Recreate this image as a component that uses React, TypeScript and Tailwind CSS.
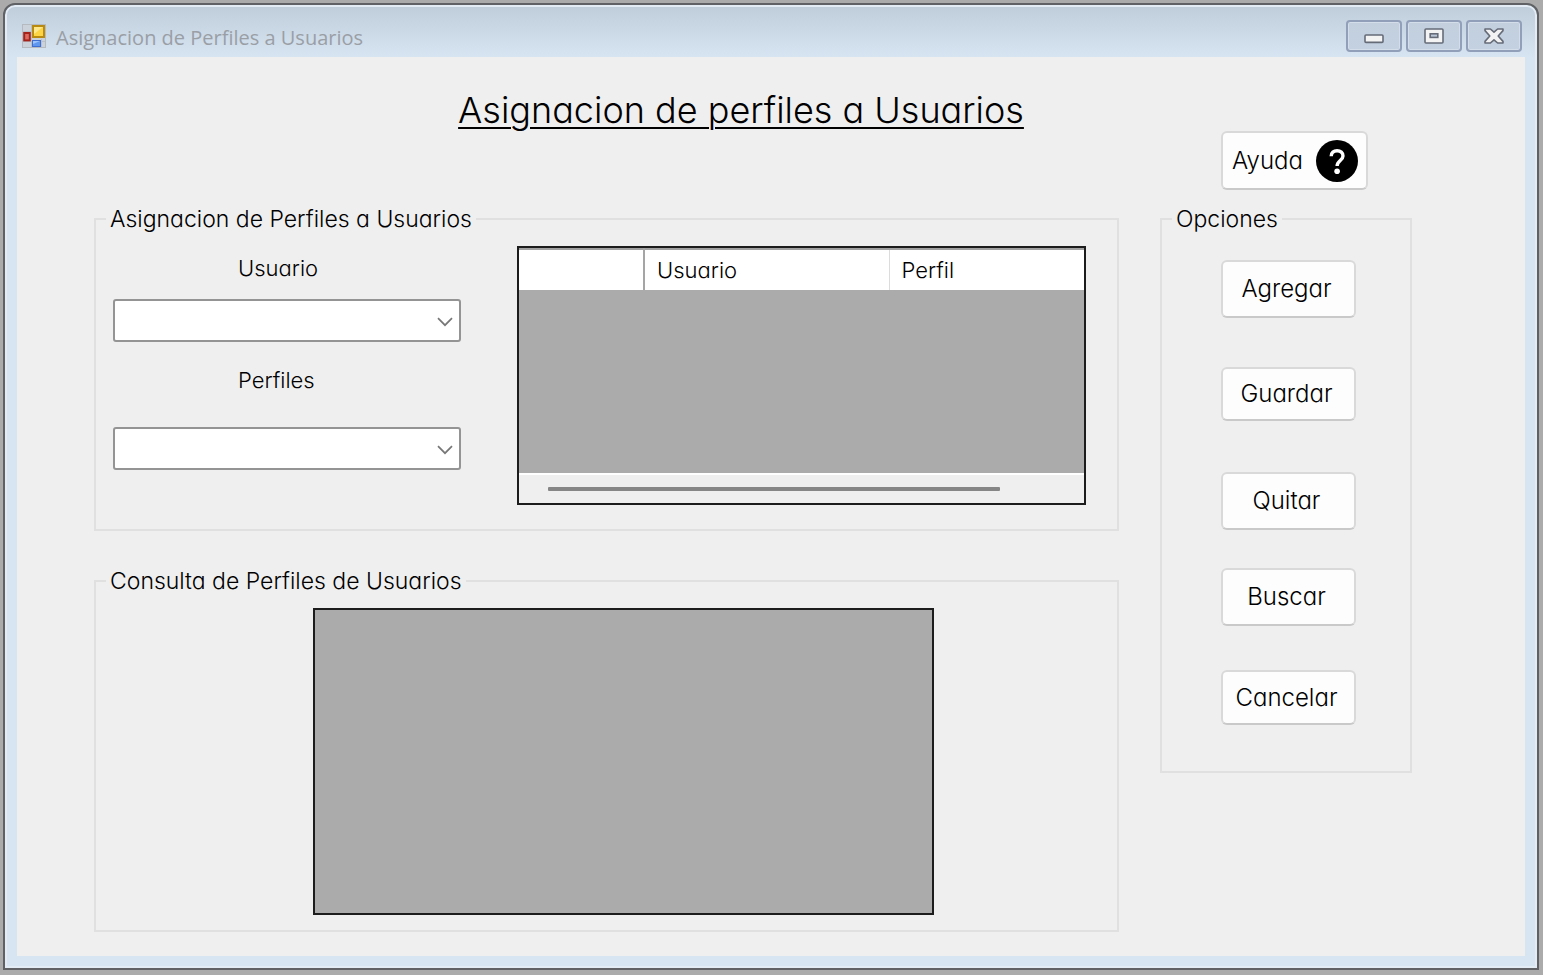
import type { ReactNode } from "react";

const caption =
  "flex h-8 w-14 items-center justify-center rounded-[4px] border-2 border-[#919fb8] bg-linear-to-b from-[#c3cfdd] to-[#c3d1e1] shadow-[inset_0_0_0_1px_#d3deea]";

function FormIcon() {
  return (
    <svg width="24" height="24" viewBox="0 0 24 24" aria-hidden="true">
      <rect x="0.5" y="0.5" width="23" height="23" fill="#cbd2da" stroke="#b5bac1" />
      <path d="M9.5 1v22M1 17.5h22M19.5 15v8M1 7.5h9" stroke="#b9c0c9" fill="none" />
      <rect x="2.2" y="9" width="5.6" height="7.4" fill="#dc6a60" stroke="#a5221b" strokeWidth="2" />
      <rect x="11" y="2" width="11" height="11" fill="#fdd444" stroke="#b98a10" strokeWidth="2" />
      <path d="M12 3h9l-9 7z" fill="#ffe88c" />
      <rect x="10.5" y="16.5" width="8" height="6" fill="#5e97ee" stroke="#3e6fd0" />
      <path d="M11 17h7l-7 3z" fill="#9cc4fa" />
    </svg>
  );
}

function MinimizeIcon() {
  return (
    <svg width="20" height="16" viewBox="0 0 20 16" aria-hidden="true">
      <rect x="1" y="7" width="18" height="7.4" rx="1" fill="#f3f3f3" stroke="#666b78" strokeWidth="1.6" />
    </svg>
  );
}

function MaximizeIcon() {
  return (
    <svg width="20" height="16" viewBox="0 0 20 16" aria-hidden="true">
      <rect x="1" y="1" width="18" height="14" rx="1" fill="#f3f3f3" stroke="#666b78" strokeWidth="1.6" />
      <rect x="6.2" y="5.8" width="7.6" height="3.6" fill="#b9c6d6" stroke="#666b78" strokeWidth="1.6" />
    </svg>
  );
}

function CloseIcon() {
  return (
    <svg width="20" height="16" viewBox="0 0 20 16" aria-hidden="true">
      <path
        d="M1 1h5.4L10 4.2 13.6 1H19v1.6L14.2 8l4.8 5.4V15h-5.4L10 11.8 6.4 15H1v-1.6L5.8 8 1 2.6z"
        fill="#f3f3f3"
        stroke="#666b78"
        strokeWidth="1.6"
        strokeLinejoin="round"
      />
    </svg>
  );
}

function HelpIcon() {
  return (
    <svg width="42" height="42" viewBox="0 0 42 42" aria-hidden="true">
      <circle cx="21" cy="21" r="21" fill="#000" />
      <path
        d="M15.2 16.2c0-3.6 2.5-5.5 5.9-5.5s5.9 2.1 5.9 5.3c0 4.4-5.9 4.8-5.9 10"
        fill="none"
        stroke="#fff"
        strokeWidth="3.4"
      />
      <circle cx="21.1" cy="31.2" r="2.8" fill="#fff" />
    </svg>
  );
}

function GroupBox({ title, className, children }: { title: string; className: string; children: ReactNode }) {
  return (
    <fieldset className="min-w-0 border-2 border-[#e0e0e0]">
      <legend className="ml-[10px] px-1 text-[23px] leading-7">{title}</legend>
      <div className={className}>{children}</div>
    </fieldset>
  );
}

function Combo({ id }: { id: string }) {
  return (
    <div className="relative">
      <select
        id={id}
        className="block h-[43px] w-full appearance-none rounded-[3px] border-2 border-[#949494] bg-white px-2"
      >
        <option value=""></option>
      </select>
      <svg
        className="pointer-events-none absolute top-[18px] right-2"
        width="16"
        height="10"
        viewBox="0 0 16 10"
        fill="none"
        stroke="#777"
        strokeWidth="1.7"
        aria-hidden="true"
      >
        <path d="M1 1.2l7 7 7-7" />
      </svg>
    </div>
  );
}

const actions = [
  { label: "Agregar", size: "h-[58px]" },
  { label: "Guardar", size: "mt-[49px] h-[54px]" },
  { label: "Quitar", size: "mt-[51px] h-[58px]" },
  { label: "Buscar", size: "mt-[38px] h-[58px]" },
  { label: "Cancelar", size: "mt-[44px] h-[55px]" },
];

const button = "rounded-[6px] border-2 border-[#d9d9d9] border-b-[#c9c9c9] bg-[#fdfdfd] text-[24px]";

export default function App() {
  return (
    <div className="flex min-h-screen flex-col bg-[#ababab] pt-[3px] pr-1 pb-[5px] pl-[3px] text-black">
      <div className="flex grow flex-col rounded-t-[12px] border-2 border-[#5f6164] bg-[#d7e4f2] bg-linear-to-b from-[#bfcddb] to-[#d7e4f2] to-[52px] px-3 pb-3 shadow-[inset_0_0_0_2px_#e3ecf5]">
        <header className="flex h-[52px] items-center pt-[10px] pr-[3px] pl-[5px]">
          <FormIcon />
          <span className="ml-[10px] grow pt-1 font-['Open_Sans','Noto_Sans',sans-serif] text-[20px] leading-7 text-[#9a9fa5]">
            Asignacion de Perfiles a Usuarios
          </span>
          <div className="flex gap-1">
            <button type="button" aria-label="Minimizar" className={caption}>
              <MinimizeIcon />
            </button>
            <button type="button" aria-label="Maximizar" className={caption}>
              <MaximizeIcon />
            </button>
            <button type="button" aria-label="Cerrar" className={caption}>
              <CloseIcon />
            </button>
          </div>
        </header>

        <main className="flex grow flex-col bg-[#efefef] pt-8 pr-[113px] pb-6 pl-[77px] font-['Inter','Lato',sans-serif] text-[22px] font-light [font-feature-settings:'cv11'] leading-7">
          <h1 className="pr-6 text-center text-[36px] leading-[42px] underline decoration-2 underline-offset-4">
            Asignacion de perfiles a Usuarios
          </h1>
          <button type="button" className={`mr-11 flex h-[59px] w-[147px] items-center justify-between self-end pr-2 pl-[9px] ${button}`}>
            Ayuda
            <HelpIcon />
          </button>

          <div className="mt-[15px] flex items-start gap-[41px]">
            <div className="flex min-w-0 grow flex-col gap-9">
              <GroupBox title="Asignacion de Perfiles a Usuarios" className="flex items-start gap-14 pt-[13px] pr-[31px] pb-6 pl-[17px]">
                <div className="flex w-[348px] shrink-0 flex-col pt-2">
                  <label htmlFor="usuario" className="mb-[17px] pl-[125px]">
                    Usuario
                  </label>
                  <Combo id="usuario" />
                  <label htmlFor="perfiles" className="mt-6 mb-[33px] pl-[125px]">
                    Perfiles
                  </label>
                  <Combo id="perfiles" />
                </div>
                <div className="flex h-[259px] min-w-0 grow flex-col border-2 border-[#1c1c1c] bg-[#ababab]">
                  <table className="w-full table-fixed border-t-2 border-[#a0a0a0] bg-white text-left">
                    <thead>
                      <tr className="h-[41px]">
                        <th className="w-[125px] border-r-2 border-[#a5a5a5]" aria-label="Fila"></th>
                        <th className="w-[245px] border-r border-[#dcdcdc] pl-3 font-light">Usuario</th>
                        <th className="pl-3 font-light">Perfil</th>
                      </tr>
                    </thead>
                  </table>
                  <div className="mt-auto flex h-[30px] items-center border-t-2 border-white bg-[#efefef] pr-[84px] pl-[29px]">
                    <div className="h-1 w-full rounded-[1px] bg-[#868686]" />
                  </div>
                </div>
              </GroupBox>

              <GroupBox title="Consulta de Perfiles de Usuarios" className="pt-[13px] pr-[183px] pb-[15px] pl-[217px]">
                <div className="h-[307px] border-2 border-[#1c1c1c] bg-[#ababab]" />
              </GroupBox>
            </div>

            <div className="w-[252px] shrink-0">
              <GroupBox title="Opciones" className="pt-[27px] pb-[46px] pl-[59px]">
                <div className="flex w-[135px] flex-col">
                  {actions.map((a) => (
                    <button key={a.label} type="button" className={`pr-1 ${button} ${a.size}`}>
                      {a.label}
                    </button>
                  ))}
                </div>
              </GroupBox>
            </div>
          </div>
        </main>
      </div>
    </div>
  );
}
